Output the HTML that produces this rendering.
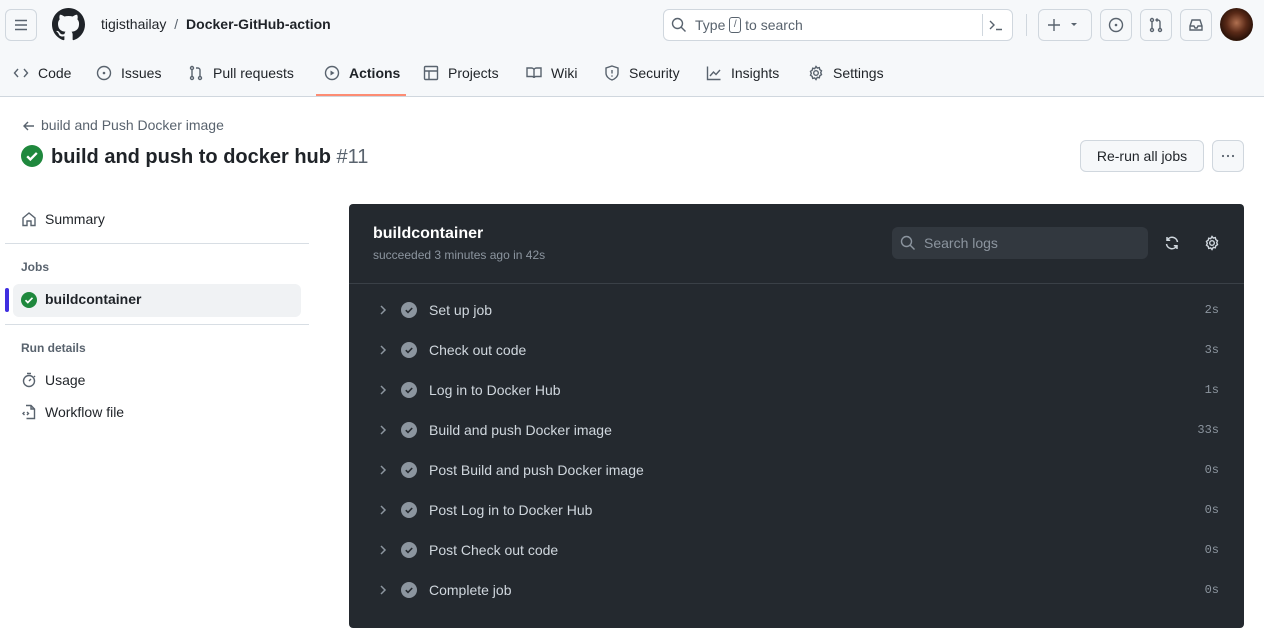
<!DOCTYPE html>
<html><head><meta charset="utf-8"><style>
*{box-sizing:border-box;margin:0;padding:0}
body{width:1264px;height:629px;overflow:hidden;background:#fff;font-family:"Liberation Sans",sans-serif;color:#1f2328;font-size:14px;position:relative}
.abs{position:absolute}
.hdr{position:absolute;left:0;top:0;width:1264px;height:97px;background:#f6f8fa;border-bottom:1px solid #d0d7de}
.btn{position:absolute;border:1px solid #d0d7de;border-radius:6px;background:#f6f8fa}
.tab{position:absolute;top:65px;font-size:14px;display:flex;align-items:center;gap:9px;color:#1f2328}
svg{display:block}
.ico{stroke:#59636e;fill:none;stroke-width:1.4}
.row{position:absolute;left:349px;width:894px;height:40px}
.row .chev{position:absolute;left:28px;top:14px}
.row .ck{position:absolute;left:52px;top:12px}
.row .t{position:absolute;left:80px;top:12px;color:#d0d7de;font-size:14px}
.row .d{position:absolute;right:24px;top:13px;color:#8c959f;font-family:"Liberation Mono",monospace;font-size:12px}
</style></head><body>
<div class="hdr"></div>
<div class="btn" style="left:5px;top:9px;width:32px;height:32px"></div>
<svg class="abs" style="left:13px;top:17px" width="16" height="16"><path d="M2 3.5h12M2 8h12M2 12.5h12" stroke="#59636e" stroke-width="1.5"/></svg>
<svg class="abs" style="left:52px;top:8px" width="33" height="33" viewBox="0 0 16 16"><path fill="#1f2328" d="M8 0C3.58 0 0 3.58 0 8c0 3.54 2.29 6.530 5.47 7.59.4.07.55-.17.55-.38 0-.19-.01-.82-.01-1.49-2.01.37-2.53-.49-2.69-.94-.09-.23-.48-.94-.82-1.130-.28-.15-.68-.52-.01-.53.63-.01 1.080.58 1.230.82.72 1.210 1.870.87 2.330.66.07-.52.28-.87.51-1.07-1.78-.2-3.64-.89-3.64-3.95 0-.87.31-1.59.82-2.150-.08-.2-.36-1.020.08-2.120 0 0 .67-.21 2.200.82.64-.18 1.320-.27 2-.27.68 0 1.360.09 2 .27 1.530-1.040 2.2-.82 2.2-.82.44 1.100.16 1.920.08 2.120.51.56.82 1.270.82 2.150 0 3.070-1.870 3.750-3.650 3.950.29.25.54.73.54 1.480 0 1.070-.01 1.930-.01 2.200 0 .21.15.46.55.38A8.013 8.013 0 0016 8c0-4.42-3.58-8-8-8z"/></svg>
<div class="abs" style="left:101px;top:16px;font-size:14px;color:#1f2328">tigisthailay <span style="color:#59636e;margin:0 4px">/</span> <b>Docker-GitHub-action</b></div>
<div class="btn" style="left:663px;top:9px;width:350px;height:32px;background:#fff"></div>
<svg class="abs" style="left:671px;top:17px" width="16" height="16"><circle cx="6.5" cy="6.5" r="5" class="ico"/><path d="M10 10l4.5 4.5" class="ico"/></svg>
<div class="abs" style="left:695px;top:17px;color:#59636e;font-size:14px;line-height:16px">Type <span style="display:inline-block;border:1px solid #59636e;border-radius:3px;width:12px;height:16px;font-size:10px;line-height:14px;text-align:center;vertical-align:top">/</span> to search</div>
<div class="abs" style="left:982px;top:14px;width:1px;height:22px;background:#d0d7de"></div>
<svg class="abs" style="left:988px;top:17px" width="16" height="16"><path d="M2 4l4 4-4 4M8 12.5h6" class="ico"/></svg>
<div class="abs" style="left:1026px;top:14px;width:1px;height:22px;background:#d0d7de"></div>
<div class="btn" style="left:1038px;top:9px;width:54px;height:32px"></div>
<svg class="abs" style="left:1046px;top:17px" width="34" height="16"><path d="M8 2v12M2 8h12" class="ico"/><path d="M25 6h6l-3 3z" fill="#59636e"/></svg>
<div class="btn" style="left:1100px;top:9px;width:32px;height:32px"></div>
<svg class="abs" style="left:1108px;top:17px" width="16" height="16"><circle cx="8" cy="8" r="6.5" class="ico"/><circle cx="8" cy="8" r="1.3" fill="#59636e"/></svg>
<div class="btn" style="left:1140px;top:9px;width:32px;height:32px"></div>
<svg class="abs" style="left:1148px;top:17px" width="16" height="16"><circle cx="4" cy="3" r="1.5" class="ico"/><circle cx="4" cy="13" r="1.5" class="ico"/><circle cx="12" cy="13" r="1.5" class="ico"/><path d="M4 4.5v7M12 11.5V5c0-1-1-2-2-2H8M9.5 1.5L8 3l1.5 1.5" class="ico"/></svg>
<div class="btn" style="left:1180px;top:9px;width:32px;height:32px"></div>
<svg class="abs" style="left:1188px;top:17px" width="16" height="16"><path d="M2 9l2-6h8l2 6v4H2zM2 9h4l1 2h2l1-2h4" class="ico"/></svg>
<div class="abs" style="left:1220px;top:8px;width:33px;height:33px;border-radius:50%;background:radial-gradient(circle at 50% 45%,#b07050 0,#5a2a18 40%,#2a1208 70%,#c9a860 100%)"></div>

<div class="tab" style="left:13px"><svg width="16" height="16"><path d="M5 4L1.5 8 5 12M11 4l3.5 4L11 12" class="ico"/></svg>Code</div>
<div class="tab" style="left:96px"><svg width="16" height="16"><circle cx="8" cy="8" r="6.5" class="ico"/><circle cx="8" cy="8" r="1.3" fill="#59636e"/></svg>Issues</div>
<div class="tab" style="left:188px"><svg width="16" height="16"><circle cx="4" cy="3" r="1.5" class="ico"/><circle cx="4" cy="13" r="1.5" class="ico"/><circle cx="12" cy="13" r="1.5" class="ico"/><path d="M4 4.5v7M12 11.5V5c0-1-1-2-2-2H8" class="ico"/></svg>Pull requests</div>
<div class="tab" style="left:324px;font-weight:bold"><svg width="16" height="16"><circle cx="8" cy="8" r="6.5" class="ico"/><path d="M6.5 5.5v5l4-2.5z" fill="#59636e"/></svg>Actions</div>
<div class="abs" style="left:316px;top:94px;width:90px;height:2px;background:#fd8c73"></div>
<div class="tab" style="left:423px"><svg width="16" height="16"><rect x="1.5" y="1.5" width="13" height="13" rx="1" class="ico"/><path d="M1.5 6h13M6 6v8.5" class="ico"/></svg>Projects</div>
<div class="tab" style="left:526px"><svg width="16" height="16"><path d="M1 3h4.5c1.5 0 2.5 1 2.5 2v8c0-1-1-1.5-2-1.5H1zM15 3h-4.5C9 3 8 4 8 5v8c0-1 1-1.5 2-1.5h5z" class="ico"/></svg>Wiki</div>
<div class="tab" style="left:604px"><svg width="16" height="16"><path d="M8 1l6 2v5c0 3.5-3 6-6 7-3-1-6-3.5-6-7V3z" class="ico"/><path d="M8 5v3.5" class="ico"/><circle cx="8" cy="11" r=".8" fill="#59636e"/></svg>Security</div>
<div class="tab" style="left:706px"><svg width="16" height="16"><path d="M1.5 1.5v13h13M4 11l3.5-4 2.5 2.5 4-4.5" class="ico"/></svg>Insights</div>
<div class="tab" style="left:808px"><svg width="16" height="16"><circle cx="8" cy="8" r="2.3" class="ico"/><path d="M8 1.5l1.3 1.6 2-.5.5 2 1.7 1.2-.8 1.9.8 1.9-1.7 1.2-.5 2-2-.5L8 14.5l-1.3-1.6-2 .5-.5-2L2.5 10.2l.8-1.9-.8-1.9 1.7-1.2.5-2 2 .5z" class="ico"/></svg>Settings</div>

<svg class="abs" style="left:21px;top:118px" width="16" height="16"><path d="M13 8H3M7 4L3 8l4 4" class="ico"/></svg>
<div class="abs" style="left:41px;top:117px;color:#59636e;font-size:14px">build and Push Docker image</div>
<svg class="abs" style="left:21px;top:145px" width="22" height="22" viewBox="0 0 16 16"><circle cx="8" cy="8" r="8" fill="#1f883d"/><path d="M4.5 8.2l2.3 2.3 4.7-4.7" stroke="#fff" stroke-width="1.7" fill="none"/></svg>
<div class="abs" style="left:51px;top:146px;font-size:20px;font-weight:bold">build and push to docker hub <span style="font-weight:normal;color:#59636e">#11</span></div>
<div class="btn" style="left:1080px;top:140px;width:124px;height:32px;text-align:center;line-height:30px;font-size:14px">Re-run all jobs</div>
<div class="btn" style="left:1212px;top:140px;width:32px;height:32px"></div>
<svg class="abs" style="left:1220px;top:148px" width="16" height="16"><circle cx="3" cy="8" r="1.1" fill="#59636e"/><circle cx="8" cy="8" r="1.1" fill="#59636e"/><circle cx="13" cy="8" r="1.1" fill="#59636e"/></svg>

<svg class="abs" style="left:21px;top:211px" width="16" height="16"><path d="M2 7l6-5 6 5v7.5H10V10H6v4.5H2z" class="ico"/></svg>
<div class="abs" style="left:45px;top:211px">Summary</div>
<div class="abs" style="left:5px;top:243px;width:304px;height:1px;background:#d8dee4"></div>
<div class="abs" style="left:21px;top:260px;font-size:12px;font-weight:bold;color:#59636e">Jobs</div>
<div class="abs" style="left:13px;top:284px;width:288px;height:33px;background:#f0f2f4;border-radius:6px"></div>
<div class="abs" style="left:5px;top:288px;width:4px;height:24px;background:#3f2ee0;border-radius:2px"></div>
<svg class="abs" style="left:21px;top:292px" width="16" height="16"><circle cx="8" cy="8" r="8" fill="#1f883d"/><path d="M4.5 8.2l2.3 2.3 4.7-4.7" stroke="#fff" stroke-width="1.7" fill="none"/></svg>
<div class="abs" style="left:45px;top:291px;font-weight:bold">buildcontainer</div>
<div class="abs" style="left:5px;top:324px;width:304px;height:1px;background:#d8dee4"></div>
<div class="abs" style="left:21px;top:341px;font-size:12px;font-weight:bold;color:#59636e">Run details</div>
<svg class="abs" style="left:21px;top:372px" width="16" height="16"><circle cx="8" cy="9" r="5.5" class="ico"/><path d="M6 1.5h4M8 9l2-2M13 4l1 1" class="ico"/></svg>
<div class="abs" style="left:45px;top:372px">Usage</div>
<svg class="abs" style="left:21px;top:404px" width="16" height="16"><path d="M5 1.5h5l3.5 3.5v9.5H5.5M10 1.5V5h3.5M3.5 8L2 9.5 3.5 11M6 8l1.5 1.5L6 11" class="ico"/></svg>
<div class="abs" style="left:45px;top:404px">Workflow file</div>

<div class="abs" style="left:349px;top:204px;width:895px;height:424px;background:#24292f;border-radius:4px"></div>
<div class="abs" style="left:373px;top:225px;color:#fff;font-weight:bold;font-size:16px">buildcontainer</div>
<div class="abs" style="left:373px;top:248px;color:#8c959f;font-size:12px">succeeded 3 minutes ago in 42s</div>
<div class="abs" style="left:892px;top:227px;width:256px;height:32px;background:#32383f;border-radius:6px"></div>
<svg class="abs" style="left:900px;top:235px" width="16" height="16"><circle cx="6.5" cy="6.5" r="5" stroke="#8c959f" stroke-width="1.4" fill="none"/><path d="M10 10l4.5 4.5" stroke="#8c959f" stroke-width="1.4"/></svg>
<div class="abs" style="left:924px;top:235px;color:#8c959f;font-size:14px">Search logs</div>
<svg class="abs" style="left:1164px;top:235px" width="16" height="16"><path d="M13.5 7A5.5 5.5 0 003.3 5M2.5 9a5.5 5.5 0 0010.2 2M3 2v3.2h3.2M13 14v-3.2H9.8" stroke="#d0d7de" stroke-width="1.5" fill="none"/></svg>
<svg class="abs" style="left:1204px;top:235px" width="16" height="16"><circle cx="8" cy="8" r="2.3" stroke="#d0d7de" stroke-width="1.4" fill="none"/><path d="M8 1.5l1.3 1.6 2-.5.5 2 1.7 1.2-.8 1.9.8 1.9-1.7 1.2-.5 2-2-.5L8 14.5l-1.3-1.6-2 .5-.5-2L2.5 10.2l.8-1.9-.8-1.9 1.7-1.2.5-2 2 .5z" stroke="#d0d7de" stroke-width="1.4" fill="none"/></svg>
<div class="abs" style="left:349px;top:283px;width:895px;height:1px;background:#3a4047"></div>

<div class="row" style="top:290px"><svg class="chev" width="12" height="12"><path d="M4 2l4 4-4 4" stroke="#8c959f" stroke-width="1.5" fill="none"/></svg><svg class="ck" width="16" height="16"><circle cx="8" cy="8" r="8" fill="#8c959f"/><path d="M4.8 8.2l2.2 2.2 4.2-4.4" stroke="#24292f" stroke-width="1.6" fill="none"/></svg><div class="t">Set up job</div><div class="d">2s</div></div>
<div class="row" style="top:330px"><svg class="chev" width="12" height="12"><path d="M4 2l4 4-4 4" stroke="#8c959f" stroke-width="1.5" fill="none"/></svg><svg class="ck" width="16" height="16"><circle cx="8" cy="8" r="8" fill="#8c959f"/><path d="M4.8 8.2l2.2 2.2 4.2-4.4" stroke="#24292f" stroke-width="1.6" fill="none"/></svg><div class="t">Check out code</div><div class="d">3s</div></div>
<div class="row" style="top:370px"><svg class="chev" width="12" height="12"><path d="M4 2l4 4-4 4" stroke="#8c959f" stroke-width="1.5" fill="none"/></svg><svg class="ck" width="16" height="16"><circle cx="8" cy="8" r="8" fill="#8c959f"/><path d="M4.8 8.2l2.2 2.2 4.2-4.4" stroke="#24292f" stroke-width="1.6" fill="none"/></svg><div class="t">Log in to Docker Hub</div><div class="d">1s</div></div>
<div class="row" style="top:410px"><svg class="chev" width="12" height="12"><path d="M4 2l4 4-4 4" stroke="#8c959f" stroke-width="1.5" fill="none"/></svg><svg class="ck" width="16" height="16"><circle cx="8" cy="8" r="8" fill="#8c959f"/><path d="M4.8 8.2l2.2 2.2 4.2-4.4" stroke="#24292f" stroke-width="1.6" fill="none"/></svg><div class="t">Build and push Docker image</div><div class="d">33s</div></div>
<div class="row" style="top:450px"><svg class="chev" width="12" height="12"><path d="M4 2l4 4-4 4" stroke="#8c959f" stroke-width="1.5" fill="none"/></svg><svg class="ck" width="16" height="16"><circle cx="8" cy="8" r="8" fill="#8c959f"/><path d="M4.8 8.2l2.2 2.2 4.2-4.4" stroke="#24292f" stroke-width="1.6" fill="none"/></svg><div class="t">Post Build and push Docker image</div><div class="d">0s</div></div>
<div class="row" style="top:490px"><svg class="chev" width="12" height="12"><path d="M4 2l4 4-4 4" stroke="#8c959f" stroke-width="1.5" fill="none"/></svg><svg class="ck" width="16" height="16"><circle cx="8" cy="8" r="8" fill="#8c959f"/><path d="M4.8 8.2l2.2 2.2 4.2-4.4" stroke="#24292f" stroke-width="1.6" fill="none"/></svg><div class="t">Post Log in to Docker Hub</div><div class="d">0s</div></div>
<div class="row" style="top:530px"><svg class="chev" width="12" height="12"><path d="M4 2l4 4-4 4" stroke="#8c959f" stroke-width="1.5" fill="none"/></svg><svg class="ck" width="16" height="16"><circle cx="8" cy="8" r="8" fill="#8c959f"/><path d="M4.8 8.2l2.2 2.2 4.2-4.4" stroke="#24292f" stroke-width="1.6" fill="none"/></svg><div class="t">Post Check out code</div><div class="d">0s</div></div>
<div class="row" style="top:570px"><svg class="chev" width="12" height="12"><path d="M4 2l4 4-4 4" stroke="#8c959f" stroke-width="1.5" fill="none"/></svg><svg class="ck" width="16" height="16"><circle cx="8" cy="8" r="8" fill="#8c959f"/><path d="M4.8 8.2l2.2 2.2 4.2-4.4" stroke="#24292f" stroke-width="1.6" fill="none"/></svg><div class="t">Complete job</div><div class="d">0s</div></div>
</body></html>
